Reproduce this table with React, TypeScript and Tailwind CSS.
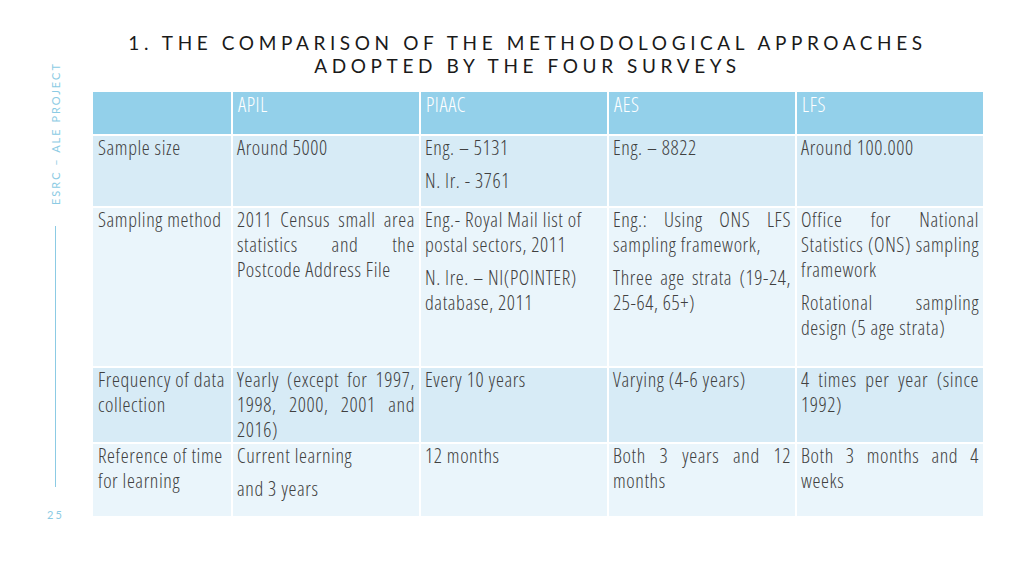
import React from "react";

type Cell = string[];

const headers = ["", "APIL", "PIAAC", "AES", "LFS"];

const rows: { label: string; cells: Cell[]; height: string; bg: string; left?: number[] }[] = [
  {
    label: "Sample size",
    cells: [["Around 5000"], ["Eng. – 5131", "N. Ir. - 3761"], ["Eng. – 8822"], ["Around 100.000"]],
    height: "h-[70px]",
    bg: "bg-[#d7ebf6]",
  },
  {
    label: "Sampling method",
    cells: [
      ["2011 Census small area statistics and the Postcode Address File"],
      ["Eng.- Royal Mail list of postal sectors, 2011", "N. Ire. – NI(POINTER) database, 2011"],
      ["Eng.: Using ONS LFS sampling framework,", "Three age strata (19-24, 25-64, 65+)"],
      ["Office for National Statistics (ONS) sampling framework", "Rotational sampling design (5 age strata)"],
    ],
    height: "h-[158px]",
    bg: "bg-[#eaf5fb]",
    left: [1],
  },
  {
    label: "Frequency of data collection",
    cells: [
      ["Yearly (except for 1997, 1998, 2000, 2001 and 2016)"],
      ["Every 10 years"],
      ["Varying (4-6 years)"],
      ["4 times per year (since 1992)"],
    ],
    height: "h-[74px]",
    bg: "bg-[#d7ebf6]",
  },
  {
    label: "Reference of time for learning",
    cells: [["Current learning", "and 3 years"], ["12 months"], ["Both 3 years and 12 months"], ["Both 3 months and 4 weeks"]],
    height: "h-[72px]",
    bg: "bg-[#eaf5fb]",
  },
];

const cellFont =
  "font-['Open_Sans',sans-serif] [font-stretch:75%] font-light text-[20px] tracking-[0.6px] leading-[25px]";

export default function App() {
  return (
    <div className="w-[1024px] h-[576px] bg-white flex">
      {/* Side rail */}
      <aside className="w-[93px] pl-[18px] pt-[62px] flex flex-col items-center text-[#8ccbe4] font-['Lato',sans-serif]">
        <div className="[writing-mode:vertical-rl] rotate-180 text-[11px] tracking-[2px] leading-none h-[143px] text-center">
          ESRC – ALE PROJECT
        </div>
        <div className="w-px h-[261px] bg-[#8ccbe4] mt-[21px]" />
        <div className="mt-[22px] text-[11px] tracking-[2px] leading-none">25</div>
      </aside>

      <main className="flex-1 flex flex-col">
        <h1 className="pt-[31px] pr-[62px] text-center font-['Lato',sans-serif] text-[19px] leading-[23px] tracking-[4.6px] text-[#1a1a1a] font-normal h-[92px]">
          1. THE COMPARISON OF THE METHODOLOGICAL APPROACHES
          <br />
          ADOPTED BY THE FOUR SURVEYS
        </h1>

        <div className={`grid grid-cols-[138px_186px_186px_186px_186px] gap-[2px] w-[890px] text-[#404040] ${cellFont}`}>
          {headers.map((h, i) => (
            <div key={i} className="h-[42px] bg-[#93d0ea] text-white px-[5px]">
              {h}
            </div>
          ))}
          {rows.map((row) => (
            <React.Fragment key={row.label}>
              <div className={`${row.height} ${row.bg} px-[5px] -mt-0`}>
                <p className="-mt-[1px]">{row.label}</p>
              </div>
              {row.cells.map((paras, j) => (
                <div key={j} className={`${row.height} ${row.bg} px-[4px] flex flex-col gap-[8px]`}>
                  {paras.map((p, k) => (
                    <p
                      key={k}
                      className={`${k === 0 ? "-mt-[1px]" : ""} ${row.left?.includes(j) ? "text-left" : "text-justify"}`}
                    >
                      {p}
                    </p>
                  ))}
                </div>
              ))}
            </React.Fragment>
          ))}
        </div>
      </main>
    </div>
  );
}
